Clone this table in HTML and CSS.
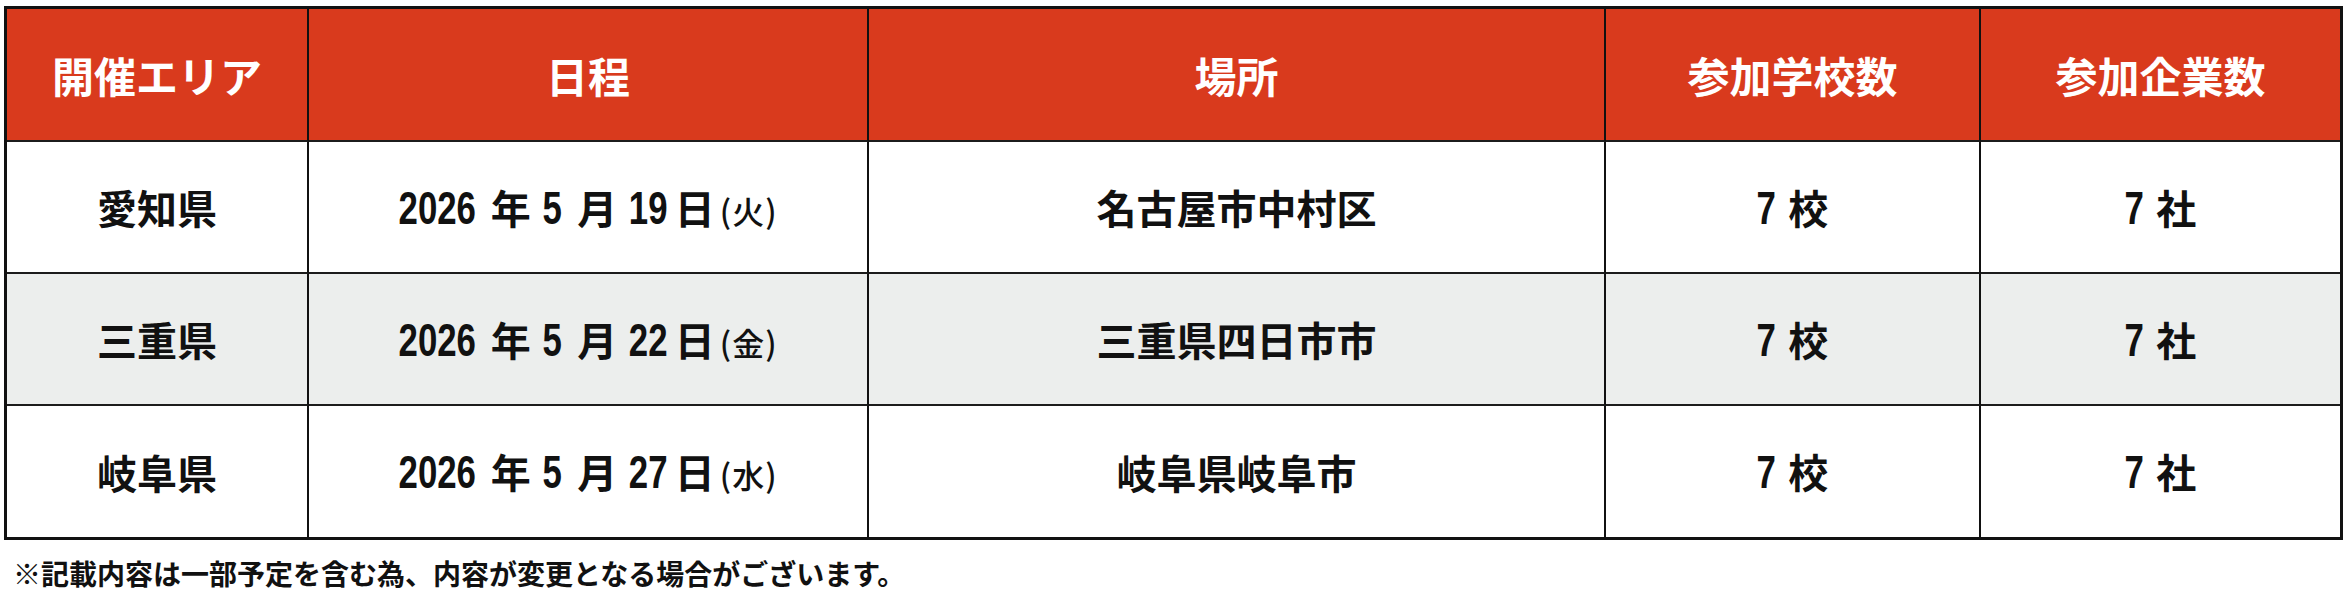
FILE: index.html
```html
<!DOCTYPE html>
<html lang="ja">
<head>
<meta charset="utf-8">
<title>開催日程</title>
<link rel="stylesheet" href="styles.css">
</head>
<body>
<main class="page">
  <table class="schedule">
    <thead>
      <tr>
        <th class="c1">開催エリア</th>
        <th class="c2">日程</th>
        <th class="c3">場所</th>
        <th class="c4">参加学校数</th>
        <th class="c5">参加企業数</th>
      </tr>
    </thead>
    <tbody>
      <tr>
        <td>愛知県</td>
        <td><span class="date"><span class="num n4">2026</span><span class="kj">年</span><span class="num n1">5</span><span class="kj">月</span><span class="num n2">19</span><span class="kj kj-day">日</span><span class="dow">(火)</span></span></td>
        <td>名古屋市中村区</td>
        <td><span class="count"><span class="num n1">7</span><span class="unit">校</span></span></td>
        <td><span class="count"><span class="num n1">7</span><span class="unit">社</span></span></td>
      </tr>
      <tr class="alt">
        <td>三重県</td>
        <td><span class="date"><span class="num n4">2026</span><span class="kj">年</span><span class="num n1">5</span><span class="kj">月</span><span class="num n2">22</span><span class="kj kj-day">日</span><span class="dow">(金)</span></span></td>
        <td>三重県四日市市</td>
        <td><span class="count"><span class="num n1">7</span><span class="unit">校</span></span></td>
        <td><span class="count"><span class="num n1">7</span><span class="unit">社</span></span></td>
      </tr>
      <tr class="last">
        <td>岐阜県</td>
        <td><span class="date"><span class="num n4">2026</span><span class="kj">年</span><span class="num n1">5</span><span class="kj">月</span><span class="num n2">27</span><span class="kj kj-day">日</span><span class="dow">(水)</span></span></td>
        <td>岐阜県岐阜市</td>
        <td><span class="count"><span class="num n1">7</span><span class="unit">校</span></span></td>
        <td><span class="count"><span class="num n1">7</span><span class="unit">社</span></span></td>
      </tr>
    </tbody>
  </table>
  <p class="note">※記載内容は一部予定を含む為、内容が変更となる場合がございます。</p>
</main>
</body>
</html>
```
FILE: styles.css
```css
html, body {
  margin: 0;
  padding: 0;
  background: #ffffff;
}

body {
  font-family: "Noto Sans CJK JP", "Noto Sans", sans-serif;
  color: #111111;
}

.page {
  padding: 6px 0 0 4px;
}

.schedule {
  border-collapse: separate;
  border-spacing: 0;
  border: 3px solid #111111;
  table-layout: fixed;
  width: 2339px;
}

.schedule th,
.schedule td {
  box-sizing: border-box;
  padding: 0;
  text-align: center;
  vertical-align: middle;
  border-right: 2px solid #111111;
  border-bottom: 2px solid #1c1c1c;
}

.schedule th:last-child,
.schedule td:last-child {
  border-right: none;
}

.schedule th {
  background: #d93a1d;
  color: #ffffff;
  font-size: 42px;
  font-weight: 700;
  height: 133px;
  line-height: 1;
}

.schedule th.c1 { width: 302px; }
.schedule th.c2 { width: 560px; }
.schedule th.c3 { width: 737px; }
.schedule th.c4 { width: 375px; }
.schedule th.c5 { width: 359px; }

.schedule td {
  background: #ffffff;
  font-size: 40px;
  font-weight: 700;
  height: 132px;
  line-height: 1;
}

.schedule tr.alt td {
  background: #eceeed;
}

.schedule tr.last td {
  border-bottom: none;
  height: 131px;
}

.date,
.count {
  display: inline-flex;
  align-items: baseline;
  justify-content: center;
}

/* condensed numerals: Arial-metric digits (0.556em) squeezed horizontally */
.num {
  display: inline-block;
  font-family: "Liberation Sans", "Arial", sans-serif;
  font-size: 47px;
  font-weight: 700;
  transform: scaleX(0.74);
  transform-origin: center;
}

.n1 { margin: 0 -3.4px; }
.n2 { margin: 0 -6.8px; }
.n4 { margin: 0 -13.6px; }

.kj {
  margin: 0 12px 0 15px;
}

.kj-day {
  margin: 0 5px 0 7px;
}

.dow {
  font-size: 32px;
  font-weight: 500;
  letter-spacing: 1px;
}

.unit {
  margin-left: 12px;
}

.note {
  margin: 14px 0 0 0;
  padding-left: 9px;
  font-size: 28px;
  font-weight: 700;
  line-height: 38px;
  color: #111111;
}
```
